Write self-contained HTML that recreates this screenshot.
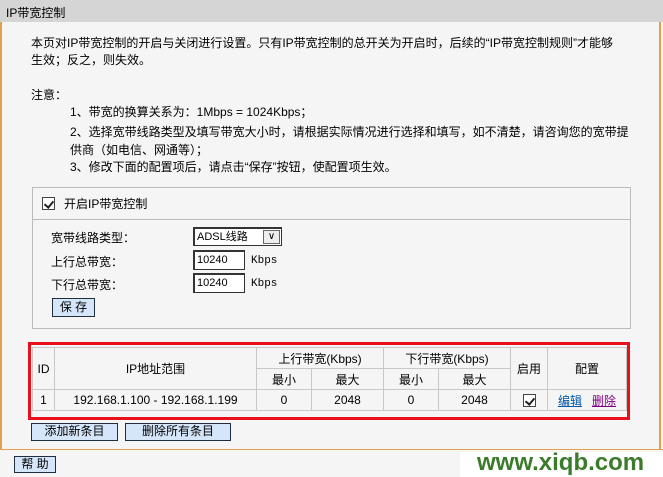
<!DOCTYPE html>
<html><head><meta charset="utf-8"><style>
*{margin:0;padding:0;box-sizing:border-box}
body{width:663px;height:477px;position:relative;overflow:hidden;background:#f5f5f5;font:12px "Liberation Sans","Noto Sans CJK SC",sans-serif;color:#000}
.a{position:absolute;white-space:nowrap}
.hdr{left:0;top:0;width:663px;height:22px;background:#d5d5d5}
.btn{position:absolute;background:#d6e6fa;border:1px solid #1f2f40;text-align:center;font-size:12px;line-height:15px}
.inp{position:absolute;background:#fff;border:1px solid #333;border-top:2px solid #333;border-left:2px solid #333;font:11px "Liberation Sans",sans-serif;padding-left:2px;line-height:16px}
table{border-collapse:collapse;position:absolute;left:32px;top:347px;width:595px}
td{border:1px solid #c8c8c8;text-align:center;height:21px;font-size:12px;padding:0}
a{text-decoration:underline}
.cb{display:inline-block;width:13px;height:13px;border:1px solid #444;background:#fff;position:relative;vertical-align:middle}
.cb:after{content:"";position:absolute;left:3px;top:1px;width:4px;height:7px;border:solid #222;border-width:0 2px 2px 0;transform:rotate(40deg)}
</style></head><body>
<div class="a hdr"></div>
<div class="a" style="left:6px;top:4px">IP带宽控制</div>
<div class="a" style="left:0;top:22px;width:2px;height:428px;background:#e0a050"></div>
<div class="a" style="left:659px;top:22px;width:2px;height:428px;background:#e0a050"></div>
<div class="a" style="left:0;top:449px;width:663px;height:1px;background:#e0a050"></div>

<div class="a" style="left:31px;top:34px">本页对IP带宽控制的开启与关闭进行设置。只有IP带宽控制的总开关为开启时，后续的“IP带宽控制规则”才能够</div>
<div class="a" style="left:31px;top:51px">生效；反之，则失效。</div>
<div class="a" style="left:31px;top:86px">注意：</div>
<div class="a" style="left:70px;top:103px">1、带宽的换算关系为：1Mbps = 1024Kbps；</div>
<div class="a" style="left:70px;top:123px">2、选择宽带线路类型及填写带宽大小时，请根据实际情况进行选择和填写，如不清楚，请咨询您的宽带提</div>
<div class="a" style="left:70px;top:141px">供商（如电信、网通等）；</div>
<div class="a" style="left:70px;top:158px">3、修改下面的配置项后，请点击“保存”按钮，使配置项生效。</div>

<div class="a" style="left:32px;top:187px;width:599px;height:142px;border:1px solid #bbb"></div>
<div class="a" style="left:32px;top:219px;width:599px;height:1px;background:#bbb"></div>
<div class="a" style="left:42px;top:196px"><span class="cb"></span></div>
<div class="a" style="left:64px;top:195px">开启IP带宽控制</div>
<div class="a" style="left:51px;top:229px">宽带线路类型：</div>
<div class="a" style="left:51px;top:253px">上行总带宽：</div>
<div class="a" style="left:51px;top:276px">下行总带宽：</div>
<div class="inp" style="left:193px;top:227px;width:89px;height:19px">ADSL线路<span style="position:absolute;right:1px;top:1px;width:17px;height:14px;border:1px solid #666;background:#eee;text-align:center;font-size:10px;line-height:12px">&#8744;</span></div>
<div class="inp" style="left:193px;top:250px;width:52px;height:20px">10240</div>
<div class="inp" style="left:193px;top:273px;width:52px;height:20px">10240</div>
<div class="a" style="left:251px;top:255px;font:11px 'Liberation Mono',monospace">Kbps</div>
<div class="a" style="left:251px;top:278px;font:11px 'Liberation Mono',monospace">Kbps</div>
<div class="btn" style="left:52px;top:298px;width:43px;height:19px;line-height:17px">保 存</div>

<div class="a" style="left:28px;top:342px;width:602px;height:78px;border:3px solid #e8101a"></div>
<table>
<tr><td rowspan="2" style="width:22px">ID</td><td rowspan="2" style="width:202px">IP地址范围</td><td colspan="2">上行带宽(Kbps)</td><td colspan="2">下行带宽(Kbps)</td><td rowspan="2" style="width:37px">启用</td><td rowspan="2">配置</td></tr>
<tr><td style="width:55px">最小</td><td style="width:72px">最大</td><td style="width:55px">最小</td><td style="width:72px">最大</td></tr>
<tr><td>1</td><td>192.168.1.100 - 192.168.1.199</td><td>0</td><td>2048</td><td>0</td><td>2048</td><td><span class="cb"></span></td><td><a style="color:#0057a8">编辑</a>&nbsp;&nbsp;&nbsp;<a style="color:#800080">删除</a></td></tr>
</table>
<div class="btn" style="left:31px;top:423px;width:87px;height:18px">添加新条目</div>
<div class="btn" style="left:125px;top:423px;width:106px;height:18px">删除所有条目</div>

<div class="btn" style="left:14px;top:456px;width:42px;height:17px">帮 助</div>
<div class="a" style="left:460px;top:452px;width:203px;height:25px;background:#fff"></div>
<div class="a" style="left:477px;top:449px;font:bold 24px 'Liberation Sans',sans-serif;color:#3c7a2c">www.xiqb.com</div>
</body></html>
